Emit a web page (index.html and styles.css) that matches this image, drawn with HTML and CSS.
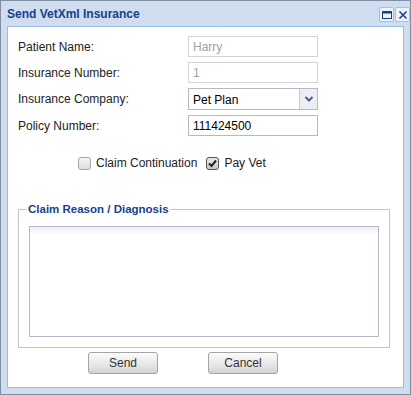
FILE: index.html
```html
<!DOCTYPE html>
<html>
	<head>
		<title>Send VetXml Insurance</title>
		<link rel="stylesheet" href="styles.css">
	</head>
	<body>
		<div class="window">
			<div class="header">
				<span class="title">Send VetXml Insurance</span>
				<div class="tools">
					<span class="tool">
						<svg width="12" height="12" viewBox="0 0 12 12"><rect x="1.5" y="2.5" width="9" height="7" fill="none" stroke="#15428b" stroke-width="1"/><rect x="1" y="2" width="10" height="2.5" fill="#15428b"/></svg>
					</span>
					<span class="tool">
						<svg width="12" height="12" viewBox="0 0 12 12"><path d="M2.5 2.5 L9.5 9.5 M9.5 2.5 L2.5 9.5" stroke="#15428b" stroke-width="1.6" fill="none"/></svg>
					</span>
				</div>
			</div>

			<div class="content">
				<div class="form">
					<label>Patient Name:</label>
					<div class="field disabled">Harry</div>

					<label>Insurance Number:</label>
					<div class="field disabled">1</div>

					<label>Insurance Company:</label>
					<div class="combo">
						<span class="combo-text">Pet Plan</span>
						<span class="trigger">
							<svg width="10" height="8" viewBox="0 0 10 8"><path d="M1.5 2 L5 5.5 L8.5 2" stroke="#4a5f87" stroke-width="2" fill="none"/></svg>
						</span>
					</div>

					<label>Policy Number:</label>
					<div class="field">111424500</div>
				</div>

				<div class="checks">
					<span class="check"></span>
					<span class="check-label">Claim Continuation</span>
					<span class="check checked">
						<svg width="11" height="11" viewBox="0 0 11 11"><path d="M2 5.5 L4.5 8 L9 2.5" stroke="#222" stroke-width="2" fill="none"/></svg>
					</span>
					<span class="check-label">Pay Vet</span>
				</div>

				<fieldset class="reason">
					<legend>Claim Reason / Diagnosis</legend>
					<div class="textarea"></div>
				</fieldset>

				<div class="buttons">
					<button class="btn">Send</button>
					<button class="btn">Cancel</button>
				</div>
			</div>
		</div>
	</body>
</html>
```

FILE: styles.css
```css
body{
	margin: 0;
	font-family: "Liberation Sans", Arial, sans-serif;
}

/* outer window frame */
.window{
	width: 411px;
	height: 395px;
	box-sizing: border-box;
	border: 1px solid #7f8fa3;
	background-color: #d0ddee;
	padding: 0 6px 6px 6px;
	display: flex;
	flex-direction: column;
}

.header{
	height: 25px;
	display: flex;
	align-items: center;
	justify-content: space-between;
}

.title{
	font-size: 12px;
	font-weight: bold;
	color: #15428b;
	margin-top: 1px;
}

.tools{
	display: flex;
	gap: 1px;
	margin-right: -6px;
	margin-top: 2px;
}

.tool{
	width: 13px;
	height: 13px;
	border: 1px solid #a9bfdc;
	border-radius: 2px;
	background-color: #edf2fa;
	display: flex;
	align-items: center;
	justify-content: center;
}

/* white body of the window */
.content{
	flex: 1;
	background-color: white;
	border: 1px solid #99bbe8;
	padding: 9px 0 0 10px;
	font-size: 12px;
	color: #222;
}

.form{
	display: grid;
	grid-template-columns: 170px 130px;
	row-gap: 5px;
	align-items: center;
}

.field{
	height: 21px;
	box-sizing: border-box;
	border: 1px solid #b5b8c8;
	padding: 3px 4px 0 4px;
	font-size: 12px;
	color: black;
	background-color: white;
}

.field.disabled{
	border-color: #d4d4d4;
	color: #a0a0a0;
}

.combo{
	height: 22px;
	box-sizing: border-box;
	border: 1px solid #b5b8c8;
	display: flex;
	color: black;
}

.combo-text{
	flex: 1;
	padding: 4px 4px 0 4px;
}

.trigger{
	width: 17px;
	border-left: 1px solid #c9ccd6;
	background-color: #eceef3;
	display: flex;
	align-items: center;
	justify-content: center;
}

.checks{
	display: flex;
	align-items: center;
	margin-top: 17px;
	padding-left: 60px;
	height: 20px;
}

.check{
	width: 13px;
	height: 13px;
	box-sizing: border-box;
	border: 1px solid #a7a7a7;
	border-radius: 3px;
	background: linear-gradient(#f4f4f4, #dcdcdc);
	display: flex;
	align-items: center;
	justify-content: center;
}

.check.checked{
	border-color: #555;
	background: linear-gradient(#e8e8e8, #c8c8c8);
}

.check-label{
	margin-left: 5px;
	margin-right: 9px;
	color: #222;
}

/* claim reason box */
.reason{
	margin: 30px 13px 0 0;
	padding: 11px 10px 10px 10px;
	border: 1px solid #c4c4c4;
}

.reason legend{
	font-size: 11.5px;
	font-weight: bold;
	color: #15428b;
	padding: 0 1px;
	margin-left: -2px;
}

.textarea{
	height: 111px;
	box-sizing: border-box;
	border: 1px solid #b5b8c8;
	background: linear-gradient(#eef0f4, white 8px);
}

.buttons{
	display: flex;
	gap: 50px;
	padding-left: 70px;
	margin-top: 4px;
}

.btn{
	width: 70px;
	height: 22px;
	border: 1px solid #a5a5a5;
	border-radius: 3px;
	background: linear-gradient(#fbfbfb, #e6e6e6 60%, #d4d4d4);
	font-family: "Liberation Sans", Arial, sans-serif;
	font-size: 12px;
	color: #333;
	padding: 0;
}
```
